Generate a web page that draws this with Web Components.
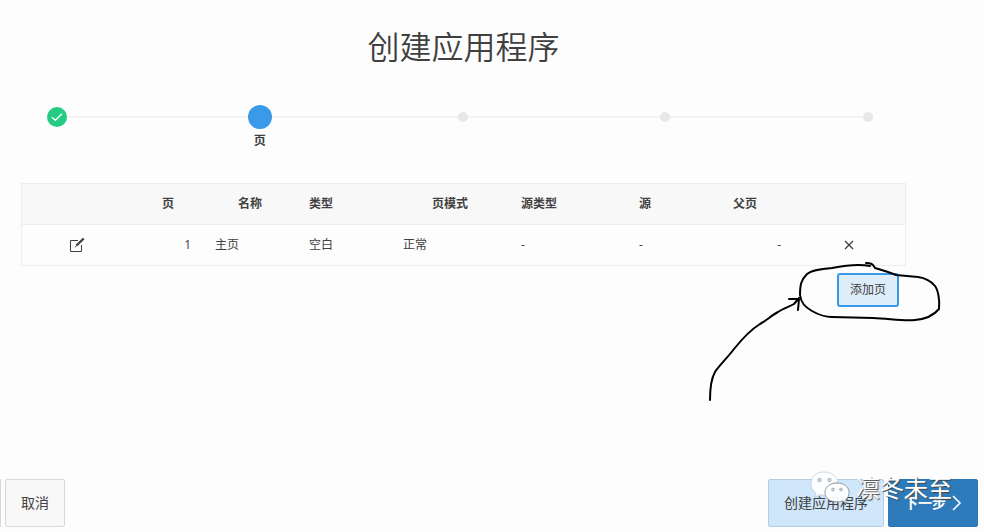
<!DOCTYPE html>
<html lang="zh-CN">
<head>
<meta charset="utf-8">
<meta name="viewport" content="width=device-width, initial-scale=1">
<title>创建应用程序</title>
<style>
    body {
        margin: 0;
        background-color: #fdfdfd;
        color: #404040;
        font: 12px/16px "Open Sans", "Noto Sans CJK SC", sans-serif;
    }
</style>
</head>
<body>
<app-wizard></app-wizard>

<script>
class WizardStep extends HTMLElement {
    constructor() {
        super();
        this.attachShadow({mode: 'open'});
        this.shadowRoot.appendChild(WizardStep.template.content.cloneNode(true));
    }
}

WizardStep.template = document.createElement('template');
WizardStep.template.innerHTML = `
<style>
    :host {
        display: flex;
        flex-direction: column;
        align-items: center;
        width: 24px;
        gap: 4px;
        font-weight: bold;
    }
    .marker {
        display: flex;
        align-items: center;
        justify-content: center;
        height: 24px;
    }
    .dot {
        width: 10px;
        height: 10px;
        border-radius: 50%;
        background-color: #e8e8e8;
    }
    svg {
        display: none;
        width: 20px;
        height: 20px;
    }
    :host([state=done]) .dot {
        width: 20px;
        height: 20px;
        background-color: #25cb80;
    }
    :host([state=done]) svg {
        display: block;
    }
    :host([state=current]) .dot {
        width: 24px;
        height: 24px;
        background-color: #3b99e9;
    }
</style>
<div class="marker">
    <div class="dot">
        <svg viewBox="0 0 20 20" fill="none" stroke="#fff" stroke-width="1.2" aria-hidden="true">
            <path d="M5 10.2 8.3 13.3 15 6.7"/>
        </svg>
    </div>
</div>
<slot></slot>
`;

window.customElements.define('wizard-step', WizardStep);

class WizardProgress extends HTMLElement {
    constructor() {
        super();
        this.attachShadow({mode: 'open'});
        this.shadowRoot.appendChild(WizardProgress.template.content.cloneNode(true));
    }
}

WizardProgress.template = document.createElement('template');
WizardProgress.template.innerHTML = `
<style>
    :host {
        display: block;
        padding: 0 26px 0 24px;
    }
    .track {
        display: flex;
        justify-content: space-between;
        background: linear-gradient(#f4f4f4, #f4f4f4) no-repeat 12px 11px / calc(100% - 24px) 2px;
    }
</style>
<div class="track"><slot></slot></div>
`;

window.customElements.define('wizard-progress', WizardProgress);

class PageTable extends HTMLElement {
    constructor() {
        super();
        this.attachShadow({mode: 'open'});
        this.shadowRoot.appendChild(PageTable.template.content.cloneNode(true));
    }
}

PageTable.template = document.createElement('template');
PageTable.template.innerHTML = `
<style>
    :host {
        display: block;
        border: 1px solid #eee;
    }
    table {
        width: 100%;
        table-layout: fixed;
        border-collapse: collapse;
    }
    th, td {
        height: 40px;
        padding: 0 12px;
        text-align: left;
    }
    th {
        background-color: #f8f8f8;
    }
    td {
        border-top: 1px solid #eee;
    }
    .center {
        text-align: center;
    }
    .right {
        text-align: right;
    }
    button {
        display: inline-flex;
        padding: 0;
        border: 0;
        background: none;
        color: inherit;
        vertical-align: middle;
        cursor: pointer;
    }
    svg {
        width: 16px;
        height: 16px;
        fill: none;
        stroke: currentColor;
    }
</style>
<table>
    <colgroup>
        <col style="width: 111px">
        <col style="width: 70px">
        <col style="width: 94px">
        <col style="width: 94px">
        <col style="width: 118px">
        <col style="width: 118px">
        <col style="width: 70px">
        <col style="width: 96px">
        <col style="width: 112px">
    </colgroup>
    <thead>
        <tr>
            <th></th>
            <th class="center">页</th>
            <th class="center">名称</th>
            <th>类型</th>
            <th class="center">页模式</th>
            <th>源类型</th>
            <th>源</th>
            <th class="center">父页</th>
            <th></th>
        </tr>
    </thead>
    <tbody>
        <tr>
            <td class="center">
                <button type="button" aria-label="编辑">
                    <svg viewBox="0 0 16 16">
                        <path d="M8 3.5H.5v11h11V8"/>
                        <path d="M6.5 8.500 13.700 1.500" stroke-width="2.4"/>
                        <path d="M4.800 10.400 7 8.300"/>
                    </svg>
                </button>
            </td>
            <td class="right">1</td>
            <td>主页</td>
            <td>空白</td>
            <td>正常</td>
            <td>-</td>
            <td>-</td>
            <td class="right">-</td>
            <td class="center">
                <button type="button" aria-label="删除">
                    <svg viewBox="0 0 16 16">
                        <path d="M4 4l8 8M12 4l-8 8" stroke-width="1.3"/>
                    </svg>
                </button>
            </td>
        </tr>
    </tbody>
</table>
`;

window.customElements.define('page-table', PageTable);

class WizardButton extends HTMLElement {
    constructor() {
        super();
        this.attachShadow({mode: 'open'});
        this.shadowRoot.appendChild(WizardButton.template.content.cloneNode(true));
    }
}

WizardButton.template = document.createElement('template');
WizardButton.template.innerHTML = `
<style>
    :host {
        display: block;
    }
    button {
        display: flex;
        align-items: center;
        gap: 4px;
        height: 48px;
        padding: 0 15px;
        border: 1px solid #d8d8d8;
        border-radius: 2px;
        background-color: #f8f8f8;
        color: #404040;
        font: inherit;
        font-size: 14px;
        white-space: nowrap;
        cursor: pointer;
    }
    :host([kind=soft]) button {
        border-color: #b5cde2;
        background-color: #d0e6fa;
    }
    :host([kind=primary]) button {
        border-color: #2b79b9;
        background-color: #2d7bbb;
        color: #fff;
        font-weight: bold;
    }
    :host([kind=outline]) button {
        height: 34px;
        padding: 0 11px;
        border: 2px solid #3b99e9;
        border-radius: 3px;
        background-color: #deedfa;
        font-size: 12px;
    }
</style>
<button type="button"><slot></slot></button>
`;

window.customElements.define('wizard-button', WizardButton);

// Hand drawn loop and arrow around the add button
class InkNote extends HTMLElement {
    constructor() {
        super();
        this.attachShadow({mode: 'open'});
        this.shadowRoot.appendChild(InkNote.template.content.cloneNode(true));
    }
}

InkNote.template = document.createElement('template');
InkNote.template.innerHTML = `
<style>
    :host {
        display: block;
        pointer-events: none;
    }
    svg {
        display: block;
        width: 250px;
        height: 155px;
    }
</style>
<svg viewBox="0 0 250 155" fill="none" stroke="#000" stroke-width="2" stroke-linecap="round" stroke-linejoin="round" aria-hidden="true">
    <path d="M170 11C160 9 147 10 132 13C120 14 112 15 107 19C101 25 100 30 100 40C101 48 105 52 112 56C119 60 124 62 132 62L173 63C192 64 203 66 215 65C227 64 234 60 239 54C240 45 238 35 235 31C231 26 225 23 218 22L196 20C189 17 182 15 175 13C173 9 171 8 166 8"/>
    <path d="M10 145C10 132 11 124 15 117C18 112 28 102 34 94C42 84 52 74 60 69C66 66 72 60 78 57C84 53 91 51 94 49L99 43M89 44H99L98 55"/>
</svg>
`;

window.customElements.define('ink-note', InkNote);

class ChatMark extends HTMLElement {
    constructor() {
        super();
        this.attachShadow({mode: 'open'});
        this.shadowRoot.appendChild(ChatMark.template.content.cloneNode(true));
    }
}

ChatMark.template = document.createElement('template');
ChatMark.template.innerHTML = `
<style>
    :host {
        display: flex;
        align-items: center;
        gap: 6px;
        color: #fff;
        font-size: 24px;
        line-height: 32px;
        white-space: nowrap;
        text-shadow: 1px 1px 1px #444;
        pointer-events: none;
    }
    svg {
        width: 40px;
        height: 34px;
    }
</style>
<svg viewBox="0 0 40 34" fill="#fff" fill-opacity=".93" stroke="#c3ccd4" stroke-width=".7" aria-hidden="true">
    <path d="M14 1C6 1 1 6 1 12.500C1 17 3 20 6 22L5 26 10 23.500Q13 24.500 16 24C16 16 21 11.500 28 11.500C27 5 21 1 14 1Z"/>
    <path stroke="#6d7780" d="M27 12C20 12 15 16 15 21.500C15 27 20 31 27 31Q30 31 32.500 30L37 32.500 35.500 28.500C38 27 39 24 39 21.500C39 16 34 12 27 12Z"/>
    <g fill="#d3dbe2" stroke="#8d98a3">
        <circle cx="9.500" cy="9" r="1.700"/>
        <circle cx="19.500" cy="9" r="1.700"/>
        <circle cx="23" cy="18.500" r="1.400"/>
        <circle cx="31" cy="18.500" r="1.400"/>
    </g>
</svg>
<span><slot></slot></span>
`;

window.customElements.define('chat-mark', ChatMark);

///////

class AppWizard extends HTMLElement {
    constructor() {
        super();
        this.attachShadow({mode: 'open'});
        this.shadowRoot.appendChild(AppWizard.template.content.cloneNode(true));
    }
}

AppWizard.template = document.createElement('template');
AppWizard.template.innerHTML = `
<style>
    :host {
        display: flex;
        flex-direction: column;
        min-height: 100vh;
    }
    main {
        flex: 1;
        padding: 23px 78px 0 21px;
    }
    h1 {
        margin: 0 0 34px;
        font-size: 32px;
        font-weight: 350;
        line-height: 48px;
        text-align: center;
    }
    page-table {
        margin-top: 34px;
    }
    .tableActions {
        position: relative;
        display: flex;
        justify-content: flex-end;
        padding: 7px 7px 0;
    }
    ink-note {
        position: absolute;
        top: -11px;
        right: -44px;
    }
    footer {
        position: relative;
        display: flex;
        align-items: center;
        gap: 4px;
        padding: 0 6px 5px 0;
    }
    .edge {
        width: 1px;
        height: 48px;
        background-color: #d8d8d8;
    }
    .spacer {
        flex: 1;
    }
    .chevron {
        width: 10px;
        height: 16px;
        margin-left: 2px;
    }
    chat-mark {
        position: absolute;
        top: -8px;
        right: 32px;
    }
</style>
<main>
    <h1>创建应用程序</h1>
    <wizard-progress>
        <wizard-step state="done"></wizard-step>
        <wizard-step state="current">页</wizard-step>
        <wizard-step></wizard-step>
        <wizard-step></wizard-step>
        <wizard-step></wizard-step>
    </wizard-progress>
    <page-table></page-table>
    <div class="tableActions">
        <wizard-button kind="outline">添加页</wizard-button>
        <ink-note></ink-note>
    </div>
</main>
<footer>
    <div class="edge"></div>
    <wizard-button>取消</wizard-button>
    <div class="spacer"></div>
    <wizard-button kind="soft">创建应用程序</wizard-button>
    <wizard-button kind="primary">下一步
        <svg class="chevron" viewBox="0 0 10 16" fill="none" stroke="#fff" stroke-width="1.6" aria-hidden="true">
            <path d="M1 1 8 8 1 15"/>
        </svg>
    </wizard-button>
    <chat-mark>凛冬未至</chat-mark>
</footer>
`;

window.customElements.define('app-wizard', AppWizard);
</script>
</body>
</html>
